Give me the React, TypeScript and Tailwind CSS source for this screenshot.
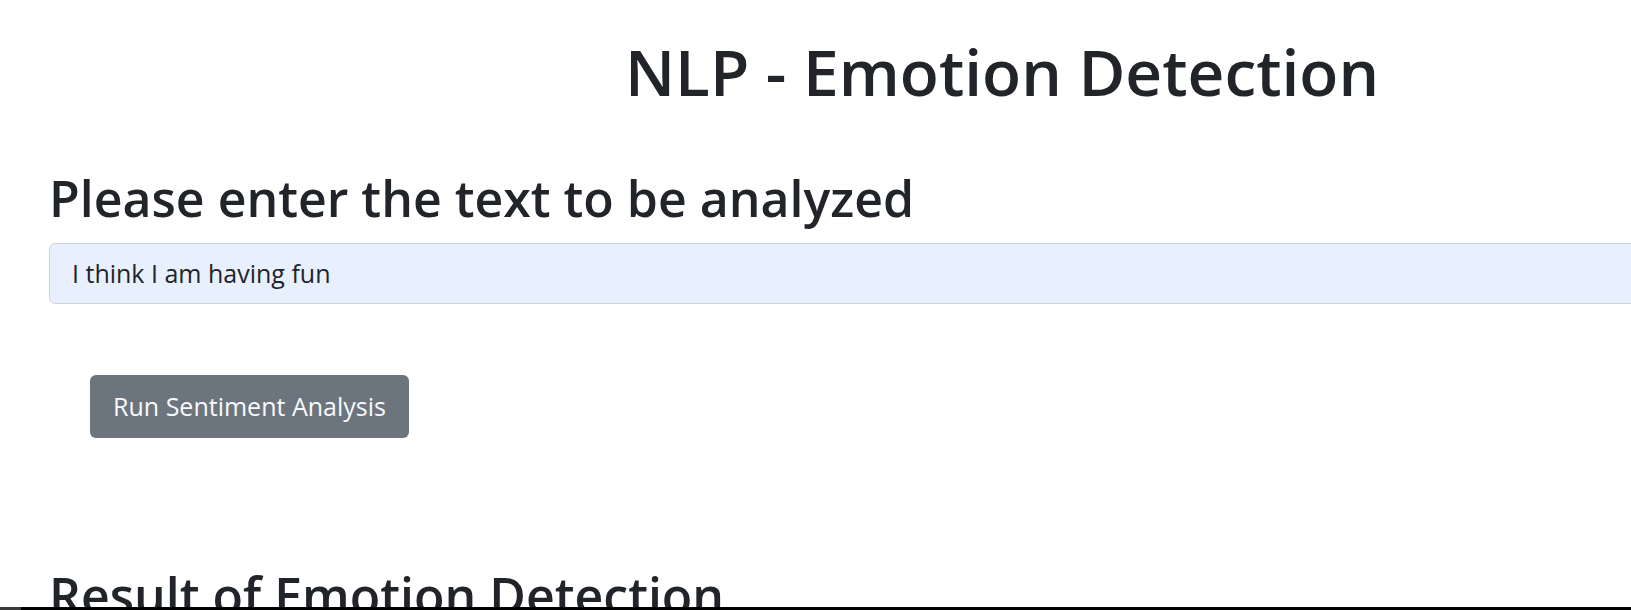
import React, { useState } from "react";

const App: React.FC = () => {
    const [text, setText] = useState<string>("I think I am having fun");

    return (
        <div className="h-[610px] w-full overflow-hidden bg-white flex flex-col text-[#212529]"
             style={{ fontFamily: '"Open Sans", "Noto Sans", sans-serif' }}>
            <div className="flex-1 overflow-hidden">
                <div className="w-[2004px] px-[49px]">
                    <h1 className="pt-[34px] text-center text-[64px] leading-[1.2] font-semibold">
                        NLP - Emotion Detection
                    </h1>
                    <h2 className="mt-[57px] text-[50px] leading-[1.2] font-semibold">
                        Please enter the text to be analyzed
                    </h2>
                    <input
                        value={text}
                        onChange={(e) => setText(e.target.value)}
                        type="text"
                        className="mt-[15px] block w-full h-[61px] px-[22px] text-[25px] bg-[#e8f0fe] border border-[#ced4da] rounded-[6px] outline-none text-[#212529]"
                    />
                    <button
                        type="button"
                        className="mt-[71px] ml-[41px] w-[319px] h-[63px] bg-[#6c757d] text-[#f8f9fa] text-[25px] rounded-[6px]"
                    >
                        Run Sentiment Analysis
                    </button>
                    <h2 className="mt-[127px] text-[50px] leading-[1.2] font-semibold">
                        Result of Emotion Detection
                    </h2>
                </div>
            </div>
            <div className="h-[3px] flex">
                <div className="w-[21px] bg-[#3a3a3a]"></div>
                <div className="flex-1 bg-black"></div>
            </div>
        </div>
    );
};

export default App;
